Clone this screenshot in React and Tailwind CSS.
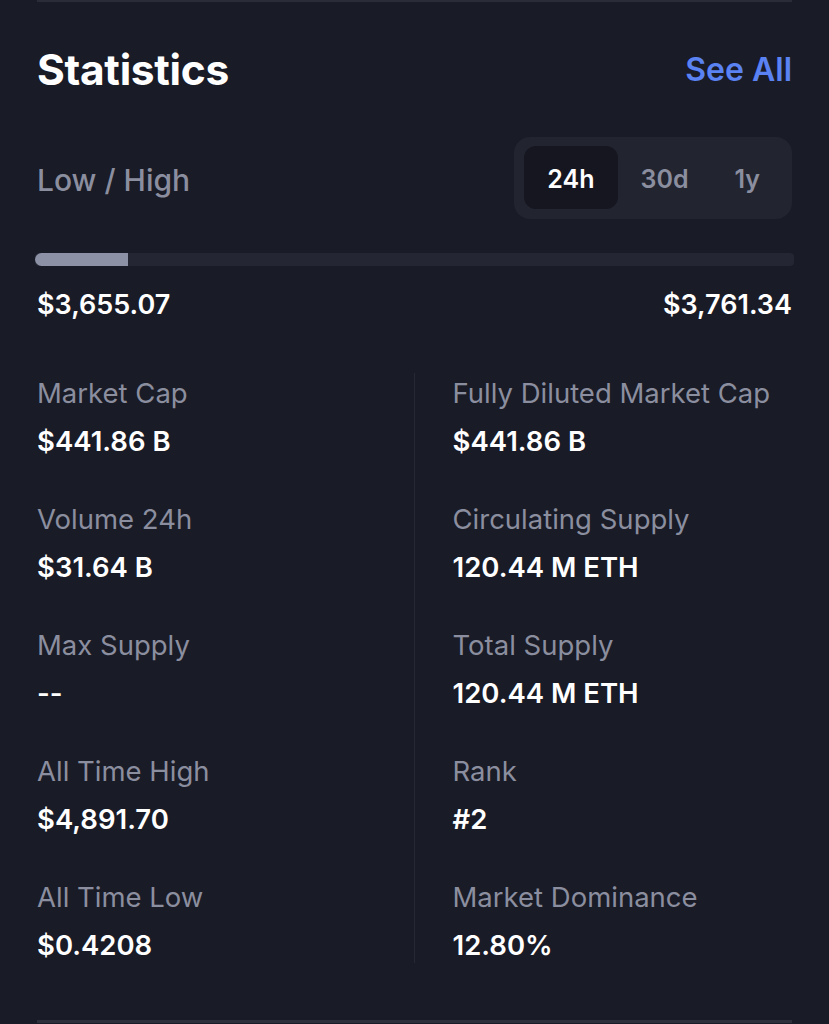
const stats = [
  ['Market Cap', '$441.86 B', 'Fully Diluted Market Cap', '$441.86 B'],
  ['Volume 24h', '$31.64 B', 'Circulating Supply', '120.44 M ETH'],
  ['Max Supply', '--', 'Total Supply', '120.44 M ETH'],
  ['All Time High', '$4,891.70', 'Rank', '#2'],
  ['All Time Low', '$0.4208', 'Market Dominance', '12.80%'],
]

function Stat({ label, value }) {
  return (
    <div>
      <div className="text-[27.5px] leading-[34px] text-[#8b8e9f]">{label}</div>
      <div className="mt-[14px] text-[27.5px] leading-[34px] font-semibold text-white">{value}</div>
    </div>
  )
}

export default function App() {
  const tabs = ['24h', '30d', '1y']
  const active = '24h'

  return (
    <div
      className="min-h-screen w-full bg-[#191b26] px-[37px]"
      style={{ fontFamily: 'Inter, "Noto Sans", sans-serif' }}
    >
      <div className="h-[2px] bg-[#2a2c37]" />

      {/* header */}
      <div className="mt-[46px] flex items-center justify-between">
        <h2 className="text-[42.5px] leading-[44px] font-bold text-white tracking-[-0.3px]">Statistics</h2>
        <button className="text-[32px] leading-[36px] font-semibold text-[#5a82f2]">See All</button>
      </div>

      {/* low / high */}
      <div className="mt-[45px] flex items-center justify-between">
        <span className="pt-[4px] text-[30px] font-medium text-[#8b8e9f]">Low / High</span>
        <div className="flex rounded-[16px] bg-[#22242f] pl-[10px] pr-[9px] pt-[9px] pb-[10px]">
          {tabs.map(t => (
            <button
              key={t}
              className={
                t === active
                  ? 'h-[63px] px-[23px] pt-[4px] rounded-[12px] bg-[#15161f] text-[25px] font-semibold text-white'
                  : 'h-[63px] px-[23px] pt-[4px] rounded-[12px] text-[25px] font-semibold text-[#8b8e9f]'
              }
            >
              {t}
            </button>
          ))}
        </div>
      </div>

      {/* range bar */}
      <div className="mt-[34px] -mx-[2px] h-[13px] rounded-[4px] bg-[#242633] overflow-hidden">
        <div className="h-full w-[93px] rounded-l-full bg-[#8d91a5]" />
      </div>

      <div className="mt-[22px] flex justify-between text-[27px] leading-[34px] font-semibold text-white">
        <span>$3,655.07</span>
        <span>$3,761.34</span>
      </div>

      {/* grid */}
      <div className="mt-[51px] grid grid-cols-2">
        <div className="flex flex-col gap-[44px] border-r border-[#262833] pt-[3px] pb-[1px]">
          {stats.map(s => (
            <Stat key={s[0]} label={s[0]} value={s[1]} />
          ))}
        </div>
        <div className="flex flex-col gap-[44px] pl-[38px] pt-[3px] pb-[1px]">
          {stats.map(s => (
            <Stat key={s[2]} label={s[2]} value={s[3]} />
          ))}
        </div>
      </div>

      <div className="mt-[57px] h-[3px] bg-[#2d2f3a]" />
    </div>
  )
}
